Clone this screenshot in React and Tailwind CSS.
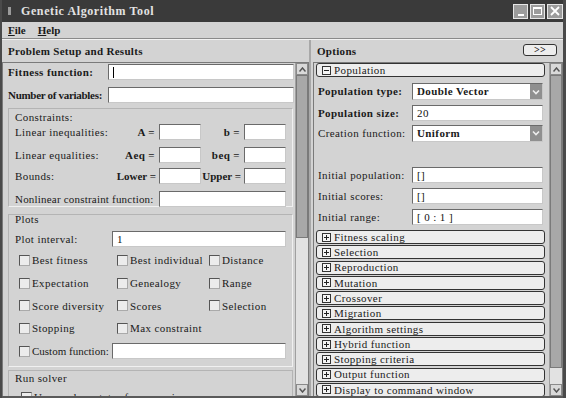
import React from 'react';

const serif = "font-['Liberation_Serif',serif]";

function Field({ className = '', children }) {
  return (
    <div className={`h-[16px] shrink-0 bg-white border border-[#6a6a6a] border-b-[#c8c8c8] border-r-[#c8c8c8] flex items-center px-[4px] text-[11px] text-[#111] ${className}`}>
      {children}
    </div>
  );
}

function Select({ children, className = '' }) {
  return (
    <div className={`h-[17px] w-[131px] shrink-0 bg-white border border-[#6a6a6a] border-b-[#c8c8c8] border-r-[#c8c8c8] flex items-center ${className}`}>
      <span className="flex-1 pl-[4px] font-bold text-[11px]">{children}</span>
      <div className="w-[12px] h-[15px] bg-[#8f8f8f] flex items-center justify-center">
        <svg width="8" height="6" viewBox="0 0 8 6"><path d="M1 1.5 L4 4.5 L7 1.5" stroke="#eee" strokeWidth="1.6" fill="none" /></svg>
      </div>
    </div>
  );
}

function Box({ plus }) {
  return (
    <svg width="9" height="9" viewBox="0 0 9 9" className="shrink-0">
      <rect x="0.5" y="0.5" width="8" height="8" fill="#f4f4f4" stroke="#333" />
      <path d="M2 4.5 H7" stroke="#222" />
      {plus && <path d="M4.5 2 V7" stroke="#222" />}
    </svg>
  );
}

function Check({ label, tight }) {
  return (
    <div className="flex items-center gap-[2px] pl-[4px]">
      <div className="w-[11px] h-[11px] shrink-0 bg-[#ececec] border border-[#555] border-b-[#aaa] border-r-[#aaa]" />
      <span className={tight ? 'text-[11px] tracking-[0px]' : 'text-[11px] tracking-[0.4px]'}>{label}</span>
    </div>
  );
}

function Arrow({ up }) {
  return (
    <div className="h-[12px] bg-[#d9d9d9] border border-[#8a8a8a] flex items-center justify-center">
      <svg width="7" height="5" viewBox="0 0 7 5">
        <path d={up ? 'M0.5 4.5 L3.5 1 L6.5 4.5' : 'M0.5 0.5 L3.5 4 L6.5 0.5'} stroke="#555" strokeWidth="1.5" fill="none" />
      </svg>
    </div>
  );
}

function ScrollBar({ thumb }) {
  return (
    <div className="w-[13px] shrink-0 flex flex-col bg-[#dcdcdc] border-l border-[#a0a0a0]">
      <Arrow up />
      <div className={`${thumb} bg-[#a8a8a8] border border-[#7a7a7a]`} />
      <div className="flex-1 bg-[#e2e2e2]" />
      <Arrow />
    </div>
  );
}

const checks = [
  ['Best fitness', 'Best individual', 'Distance'],
  ['Expectation', 'Genealogy', 'Range'],
  ['Score diversity', 'Scores', 'Selection'],
  ['Stopping', 'Max constraint', null],
];

const sections = [
  'Fitness scaling',
  'Selection',
  'Reproduction',
  'Mutation',
  'Crossover',
  'Migration',
  'Algorithm settings',
  'Hybrid function',
  'Stopping criteria',
  'Output function',
  'Display to command window',
];

export default function App() {
  return (
    <div className={`w-[566px] h-[398px] overflow-hidden whitespace-nowrap bg-[#d3d3d3] text-[#1a1a1a] ${serif} border-l-2 border-r-[3px] border-[#4a4a4a] flex flex-col`}>
      {/* title bar */}
      <div className="h-[22px] bg-[#3a3a3a] flex items-center text-[#e2e2e2] shrink-0">
        <div className="w-[3px] h-[8px] bg-[#9a9a9a] ml-[6px] mr-[10px]" />
        <span className="text-[12px] font-bold tracking-[0.6px]">Genetic Algorithm Tool</span>
        <div className="ml-auto flex gap-[2px]">
          <div className="w-[15px] h-[15px] bg-[#9c9c9c] border border-[#e6e6e6] flex items-end justify-center pb-[2px]">
            <div className="w-[6px] h-[2px] bg-white" />
          </div>
          <div className="w-[15px] h-[15px] bg-[#9c9c9c] border border-[#e6e6e6] flex items-center justify-center">
            <div className="w-[9px] h-[8px] border border-white border-t-2" />
          </div>
          <div className="w-[16px] h-[15px] bg-[#9c9c9c] border border-[#e6e6e6] flex items-center justify-center">
            <svg width="10" height="10" viewBox="0 0 10 10"><path d="M1 1 L9 9 M9 1 L1 9" stroke="#fff" strokeWidth="1.8" /></svg>
          </div>
        </div>
      </div>

      {/* menu */}
      <div className="h-[16px] flex items-center gap-[12px] pl-[6px] text-[11px] font-bold shrink-0">
        <span><span className="underline">F</span>ile</span>
        <span><span className="underline">H</span>elp</span>
      </div>
      <div className="h-[2px] border-t border-[#8a8a8a] border-b border-b-[#f2f2f2] shrink-0" />

      <div className="flex flex-1 min-h-0">
        {/* left panel */}
        <div className="w-[309px] flex flex-col border-r-2 border-[#a8a8a8]">
          <div className="h-[22px] flex items-center pl-[6px] text-[11px] font-bold tracking-[0.3px]">Problem Setup and Results</div>
          <div className="flex-1 flex border border-[#7a7a7a] border-b-0 min-h-0">
            <div className="flex-1 flex flex-col text-[11px] tracking-[0.4px] overflow-hidden">
              <div className="flex items-center mt-[1px] pl-[5px]">
                <span className="w-[100px] font-bold">Fitness function:</span>
                <Field className="w-[186px]"><span className="w-px h-[11px] bg-black" /></Field>
              </div>
              <div className="flex items-center mt-[6px] pl-[5px]">
                <span className="w-[100px] font-bold tracking-[-0.3px]">Number of variables:</span>
                <Field className="w-[186px]" />
              </div>

              {/* constraints */}
              <div className="ml-[5px] mt-[5px] w-[285px] h-[99px] shrink-0 border border-[#b4b4b4] border-b-[#f0f0f0] border-r-[#f0f0f0] pt-[2px] pl-[6px] flex flex-col">
                <div className="h-[12px] leading-[12px]">Constraints:</div>
                <div className="flex items-center mt-[1px]">
                  <span className="w-[101px]">Linear inequalities:</span>
                  <span className="w-[43px] text-right pr-[4px] font-bold">A =</span>
                  <Field className="w-[42px]" />
                  <span className="w-[43px] text-right pr-[4px] font-bold">b =</span>
                  <Field className="w-[42px]" />
                </div>
                <div className="flex items-center mt-[6px]">
                  <span className="w-[101px]">Linear equalities:</span>
                  <span className="w-[43px] text-right pr-[4px] font-bold">Aeq =</span>
                  <Field className="w-[42px]" />
                  <span className="w-[43px] text-right pr-[4px] font-bold">beq =</span>
                  <Field className="w-[42px]" />
                </div>
                <div className="flex items-center mt-[5px]">
                  <span className="w-[101px]">Bounds:</span>
                  <span className="w-[43px] text-right pr-[3px] font-bold tracking-[0px]">Lower =</span>
                  <Field className="w-[42px]" />
                  <span className="w-[43px] text-right pr-[3px] font-bold tracking-[0px]">Upper =</span>
                  <Field className="w-[42px]" />
                </div>
                <div className="flex items-center mt-[6px]">
                  <span className="w-[144px] tracking-[0.2px]">Nonlinear constraint function:</span>
                  <Field className="w-[127px]" />
                </div>
              </div>

              {/* plots */}
              <div className="ml-[5px] mt-[7px] w-[285px] h-[153px] shrink-0 border border-[#b4b4b4] border-b-[#f0f0f0] border-r-[#f0f0f0] pl-[6px] flex flex-col">
                <div className="h-[10px] leading-[8px]">Plots</div>
                <div className="flex items-center mt-[6px]">
                  <span className="w-[97px]">Plot interval:</span>
                  <Field className="w-[174px]">1</Field>
                </div>
                {checks.map((row, i) => (
                  <div key={i} className={`grid grid-cols-[98px_92px_1fr] h-[16px] items-center ${i === 0 ? 'mt-[4.5px]' : 'mt-[6.8px]'}`}>
                    {row.map((c, j) => (c ? <Check key={j} label={c} /> : <div key={j} />))}
                  </div>
                ))}
                <div className="flex items-center mt-[6.8px]">
                  <div className="w-[97px]"><Check label="Custom function:" tight /></div>
                  <Field className="w-[174px]" />
                </div>
              </div>

              {/* run solver */}
              <div className="ml-[5px] mt-[3px] w-[285px] h-[40px] shrink-0 border border-[#b4b4b4] pl-[6px] flex flex-col">
                <div className="h-[14px] leading-[14px]">Run solver</div>
                <div className="mt-[4px] pl-[2px]"><Check label="Use random states from previous run" /></div>
              </div>
            </div>
            <ScrollBar thumb="h-[163px]" />
          </div>
        </div>

        {/* right panel */}
        <div className="w-[250px] flex flex-col ml-[2px]">
          <div className="h-[22px] flex items-center pl-[4px] text-[11px] font-bold tracking-[0.3px]">
            <span>Options</span>
            <div className="ml-auto mr-[6px] mt-[-2px] w-[34px] h-[12px] rounded-[3px] border border-[#333] bg-[#ededed] flex items-center justify-center text-[10px] leading-none font-bold">&gt;&gt;</div>
          </div>
          <div className="flex-1 flex border border-[#7a7a7a] border-b-0 min-h-0">
            <div className="flex-1 flex flex-col text-[11px] tracking-[0.4px] overflow-hidden">
              <div className="ml-[2px] w-[229px] h-[14px] rounded-[3px] border border-[#333] bg-[#ededed] flex items-center gap-[3px] pl-[5px] shrink-0">
                <Box />
                <span>Population</span>
              </div>
              <div className="flex items-center pl-[4px] mt-[6px]">
                <span className="w-[94px] font-bold">Population type:</span>
                <Select>Double Vector</Select>
              </div>
              <div className="flex items-center pl-[4px] mt-[5px]">
                <span className="w-[94px] font-bold">Population size:</span>
                <Field className="w-[131px]">20</Field>
              </div>
              <div className="flex items-center pl-[4px] mt-[3px]">
                <span className="w-[94px]">Creation function:</span>
                <Select>Uniform</Select>
              </div>
              <div className="flex items-center pl-[4px] mt-[25px]">
                <span className="w-[94px]">Initial population:</span>
                <Field className="w-[131px]">[]</Field>
              </div>
              <div className="flex items-center pl-[4px] mt-[5px]">
                <span className="w-[94px]">Initial scores:</span>
                <Field className="w-[131px]">[]</Field>
              </div>
              <div className="flex items-center pl-[4px] mt-[4px]">
                <span className="w-[94px]">Initial range:</span>
                <Field className="w-[131px]">[ 0 : 1 ]</Field>
              </div>
              <div className="flex flex-col gap-[1.3px] mt-[5px]">
                {sections.map((s) => (
                  <div key={s} className="ml-[2px] w-[229px] h-[14px] rounded-[3px] border border-[#333] bg-[#ededed] flex items-center gap-[3px] pl-[5px] shrink-0">
                    <Box plus />
                    <span>{s}</span>
                  </div>
                ))}
              </div>
            </div>
            <ScrollBar thumb="h-[293px]" />
          </div>
        </div>
      </div>
      <div className="h-[2px] bg-[#5a5a5a] shrink-0" />
    </div>
  );
}
